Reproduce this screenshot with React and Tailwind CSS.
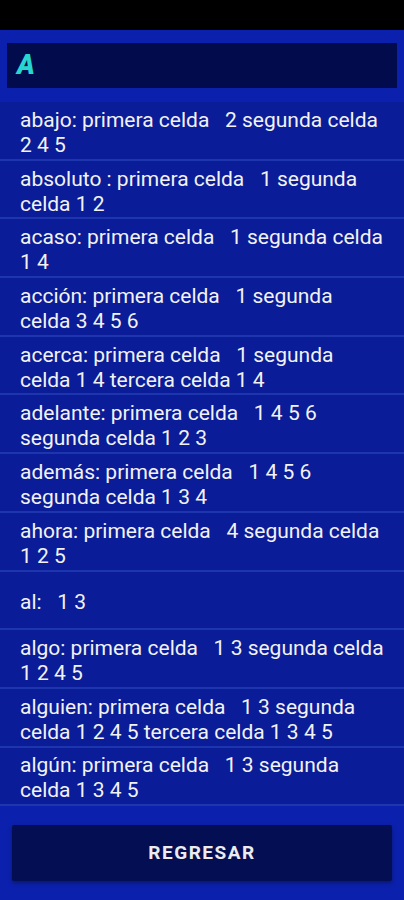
const rows = [
  'abajo: primera celda   2 segunda celda 2 4 5',
  'absoluto : primera celda   1 segunda celda 1 2',
  'acaso: primera celda   1 segunda celda 1 4',
  'acción: primera celda   1 segunda celda 3 4 5 6',
  'acerca: primera celda   1 segunda celda 1 4 tercera celda 1 4',
  'adelante: primera celda   1 4 5 6 segunda celda 1 2 3',
  'además: primera celda   1 4 5 6 segunda celda 1 3 4',
  'ahora: primera celda   4 segunda celda 1 2 5',
  'al:   1 3',
  'algo: primera celda   1 3 segunda celda 1 2 4 5',
  'alguien: primera celda   1 3 segunda celda 1 2 4 5 tercera celda 1 3 4 5',
  'algún: primera celda   1 3 segunda celda 1 3 4 5',
];

const App = () => {
  return (
    <div className="w-[404px] h-[900px] flex flex-col bg-[#0b21ad] overflow-hidden" style={{ fontFamily: 'Roboto, "Liberation Sans", sans-serif' }}>
      {/* status bar */}
      <div className="h-[30px] bg-black shrink-0" />

      {/* search header */}
      <div className="px-[7px] pt-[13px]">
        <div className="h-[45px] bg-[#020c4c] flex items-center pl-[10px]">
          <span className="text-[27px] font-black italic text-[#27d6d0] leading-none">A</span>
        </div>
      </div>

      {/* list */}
      <div className="mt-[14px] bg-[#0a1c97]">
        {rows.map((r, i) => (
          <div key={i} className="h-[58.7px] border-b-2 border-[#1d36ad] flex items-center pl-[20px] pr-[19px] pt-[5px]">
            <p className="text-[21px] leading-[25px] text-[#f2f2f2] whitespace-pre-wrap">{r}</p>
          </div>
        ))}
      </div>

      {/* button */}
      <div className="px-[12px] pt-[19px]">
        <button className="w-full h-[56px] bg-[#040e52] rounded-[2px] shadow-[0_2px_4px_rgba(0,0,0,0.35)] text-[19px] font-bold tracking-[1.5px] text-[#ececec]">
          REGRESAR
        </button>
      </div>
    </div>
  );
};

export default App;
